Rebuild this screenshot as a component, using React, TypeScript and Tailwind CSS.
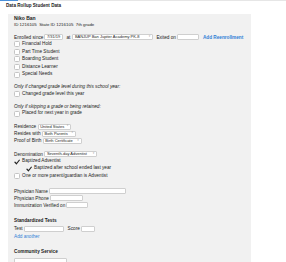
import React from "react";

const Box = ({ className = "" }: { className?: string }) => (
  <span className={`inline-block h-[6px] bg-white border border-[#cfcfcf] rounded-[1px] shrink-0 ${className}`} />
);

const Select = ({ label, className = "" }: { label: string; className?: string }) => (
  <span
    className={`inline-flex items-center justify-between h-[6px] bg-white border border-[#cfcfcf] rounded-[1px] pl-[1.5px] pr-[1.5px] shrink-0 whitespace-nowrap text-[4px] leading-none ${className}`}
  >
    <span className="leading-none">{label}</span>
    <span className="text-[2.6px] text-[#aaa] leading-none ml-[2px]">▼</span>
  </span>
);

const Check = ({ label, checked, className = "" }: { label: string; checked?: boolean; className?: string }) => (
  <div className={`flex items-center h-[7.6px] whitespace-nowrap ${className}`}>
    {checked ? (
      <svg width="6" height="6" viewBox="0 0 12 12" className="shrink-0">
        <path d="M2 6.5 L5 9.5 L10.5 2.5" fill="none" stroke="#222" strokeWidth="2.4" strokeLinecap="round" strokeLinejoin="round" />
      </svg>
    ) : (
      <span className="inline-block w-[6px] h-[6px] bg-white border border-[#c4c4c4] rounded-[1.5px] shrink-0" />
    )}
    <span className="ml-[2px] leading-none">{label}</span>
  </div>
);

export default function App() {
  return (
    <div className="w-[286px] h-[262px] overflow-hidden bg-white text-[#222] text-[4.7px] whitespace-nowrap" style={{ fontFamily: '"Liberation Sans", Arial, sans-serif' }}>
      <div className="h-px bg-[#e6e6e6] flex">
        <div className="w-[18px] bg-[#4a8fd8]" />
      </div>
      <div className="h-[11px] flex items-center pl-[6px] font-bold text-[4.6px]">Data Rollup Student Data</div>
      <div className="ml-[8px] w-[243px] h-[260px] bg-[#f1f1f1] pl-[6px] pt-[1.5px] mt-[2px]">
        <div className="h-[6px] flex items-center font-bold text-[5px]">Niko Ban</div>
        <div className="h-[6px] flex items-center mt-[1px] text-[4.4px]">ID 1216105 &nbsp;State ID 1216105 &nbsp;7th grade</div>

        <div className="h-[6.5px] flex items-center mt-[5.5px] gap-[1px]">
          <span>Enrolled since</span>
          <span className="inline-flex items-center h-[6px] min-w-[19px] shrink-0 bg-white border border-[#cfcfcf] rounded-[1px] pl-[1.5px] leading-none text-[4px]">7/31/19</span>
          <span className="ml-[2px]">at</span>
          <Select label="BANJUP Ban Jupiter Academy PK-8" className="min-w-[81px] ml-[1px]" />
          <span className="ml-[2px]">Exited on</span>
          <Box className="w-[22px]" />
          <span className="ml-[3px] text-[#2f7fd6] font-bold">Add Reenrollment</span>
        </div>

        <Check label="Financial Hold" />
        <Check label="Part Time Student" />
        <Check label="Boarding Student" />
        <Check label="Distance Learner" />
        <Check label="Special Needs" />

        <div className="h-[7px] flex items-center mt-[5px] italic">Only if changed grade level during this school year:</div>
        <Check label="Changed grade level this year" className="!h-[7px]" />

        <div className="h-[7px] flex items-center mt-[5.7px] italic">Only if skipping a grade or being retained:</div>
        <Check label="Placed for next year in grade" className="!h-[7px]" />

        <div className="h-[7px] flex items-center mt-[6px] gap-[1.5px]">
          <span>Residence</span>
          <Select label="United States" className="min-w-[32px]" />
        </div>
        <div className="h-[7.2px] flex items-center gap-[1.5px]">
          <span>Resides with</span>
          <Select label="Both Parents" className="min-w-[34px]" />
        </div>
        <div className="h-[7.2px] flex items-center gap-[1.5px]">
          <span>Proof of Birth</span>
          <Select label="Birth Certificate" className="min-w-[39px]" />
        </div>

        <div className="h-[7px] flex items-center mt-[6.4px] gap-[1.5px]">
          <span>Denomination</span>
          <Select label="Seventh-day Adventist" className="min-w-[53px]" />
        </div>
        <Check label="Baptized Adventist" checked className="!h-[7.2px]" />
        <Check label="Baptized after school ended last year" checked className="!h-[7.2px] pl-[12px]" />
        <Check label="One or more parent/guardian is Adventist" className="!h-[7.2px]" />

        <div className="h-[7px] flex items-center mt-[8.3px] gap-[1px]">
          <span>Physician Name</span>
          <Box className="w-[77px]" />
        </div>
        <div className="h-[7px] flex items-center gap-[1px]">
          <span>Physician Phone</span>
          <Box className="w-[33px]" />
        </div>
        <div className="h-[7px] flex items-center gap-[1px]">
          <span>Immunization Verified on</span>
          <Box className="w-[22px]" />
        </div>

        <div className="h-[7px] flex items-center mt-[8.7px] font-bold">Standardized Tests</div>
        <div className="h-[7px] flex items-center mt-[0.8px] gap-[1px]">
          <span>Test</span>
          <Box className="w-[40px]" />
          <span className="ml-[3px]">Score</span>
          <Box className="w-[14px]" />
        </div>
        <div className="h-[7px] flex items-center mt-[1px] text-[#2f7fd6]">Add another</div>

        <div className="h-[7px] flex items-center mt-[7.5px] font-bold">Community Service</div>
        <div className="mt-[2.8px] w-[53px] h-[14px] bg-white border border-[#cfcfcf] rounded-[1px]" />
      </div>
    </div>
  );
}
